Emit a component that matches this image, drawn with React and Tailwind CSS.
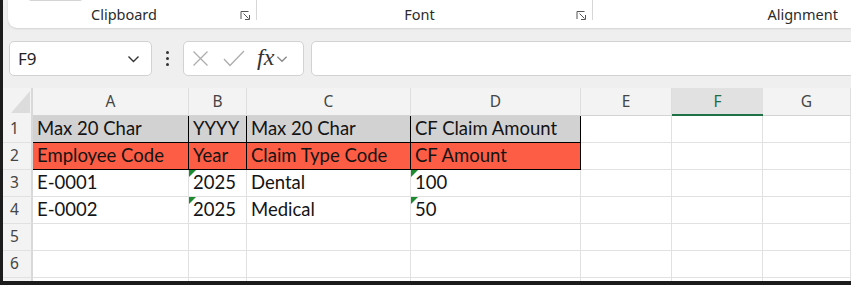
import React from 'react';

const cols = [
  { id: 'A', w: 'w-[156px]' },
  { id: 'B', w: 'w-[58px]' },
  { id: 'C', w: 'w-[164px]' },
  { id: 'D', w: 'w-[170px]' },
  { id: 'E', w: 'w-[91px]' },
  { id: 'F', w: 'w-[91px]' },
  { id: 'G', w: 'w-[88px]' },
];

const rows = [
  { n: 1, cells: ['Max 20 Char', 'YYYY', 'Max 20 Char', 'CF Claim Amount'], fill: 'bg-[#d2d2d2]', boxed: true },
  { n: 2, cells: ['Employee Code', 'Year', 'Claim Type Code', 'CF Amount'], fill: 'bg-[#fc5d44]', boxed: true },
  { n: 3, cells: ['E-0001', '2025', 'Dental', '100'], flag: [1, 3] },
  { n: 4, cells: ['E-0002', '2025', 'Medical', '50'], flag: [1, 3] },
  { n: 5, cells: [] },
  { n: 6, cells: [] },
  { n: '', cells: [] },
];

const Launcher = () => (
  <svg width="11" height="11" viewBox="0 0 11 11" fill="none" stroke="#555" strokeWidth="1">
    <path d="M1 9V1.5h7.5" />
    <path d="M3.5 3.5l5 5M9.5 5v4.5H5" />
  </svg>
);

const Chevron = ({ color = '#333', w = 13 }) => (
  <svg width={w} height="8" viewBox="0 0 13 8" fill="none" stroke={color} strokeWidth="1.4">
    <path d="M1.5 1.5l5 5 5-5" />
  </svg>
);

export default function App() {
  return (
    <div className="w-[851px] h-[285px] overflow-hidden bg-[#1c1c1c] pl-[3px] pb-[4px]">
      <div className="h-full bg-[#efefef] flex flex-col overflow-hidden">
        {/* Ribbon group labels */}
        <div className="h-[28px] shrink-0 ml-[5px] bg-white rounded-bl-[9px] shadow-[0_1px_2px_rgba(0,0,0,0.12)] flex text-[14.5px] text-[#2b2b2b] font-['Noto_Sans',sans-serif]">
          <div className="w-[249px] flex relative">
            <div className="absolute left-[20px] top-[-8px] w-[55px] h-[9px] border border-[#d4d4d4] rounded-[3px]"></div>
            <div className="flex-1 text-center pt-[3px] leading-[22px]">Clipboard</div>
            <div className="pt-[10px] mr-[5px]"><Launcher /></div>
            <div className="w-px h-[20px] bg-[#d6d6d6]"></div>
          </div>
          <div className="w-[336px] flex">
            <div className="flex-1 text-center pt-[3px] leading-[22px] pl-[6px]">Font</div>
            <div className="pt-[10px] mr-[5px]"><Launcher /></div>
            <div className="w-px h-[20px] bg-[#d6d6d6]"></div>
          </div>
          <div className="flex-1 text-right pt-[3px] leading-[22px] pr-[13px]">Alignment</div>
        </div>

        {/* Formula bar */}
        <div className="mt-[13px] h-[35px] shrink-0 flex font-['Noto_Sans',sans-serif]">
          <div className="ml-[6px] w-[143px] bg-white border border-[#d2d2d2] rounded-[5px] flex items-center justify-between pl-[8px] pr-[11px] text-[17px] text-[#222]">
            <span>F9</span>
            <Chevron />
          </div>
          <div className="w-[31px] flex flex-col items-center justify-center gap-[3px]">
            <span className="w-[3px] h-[3px] rounded-full bg-[#333]"></span>
            <span className="w-[3px] h-[3px] rounded-full bg-[#333]"></span>
            <span className="w-[3px] h-[3px] rounded-full bg-[#333]"></span>
          </div>
          <div className="w-[121px] bg-white border border-[#d2d2d2] rounded-[5px] flex items-center pl-[8px]">
            <svg width="17" height="17" viewBox="0 0 17 17" fill="none" stroke="#adadad" strokeWidth="1.3">
              <path d="M1.5 1.5l14 14M15.5 1.5l-14 14" />
            </svg>
            <svg className="ml-[14px]" width="22" height="17" viewBox="0 0 22 17" fill="none" stroke="#adadad" strokeWidth="1.3">
              <path d="M1 9l6 6.5L21 1" />
            </svg>
            <span className="ml-[12px] font-['Liberation_Serif',serif] italic text-[24px] leading-none text-[#333] -mt-[3px]">fx</span>
            <span className="ml-[2px]"><Chevron color="#888" w={12} /></span>
          </div>
          <div className="ml-[7px] flex-1 -mr-[10px] bg-white border border-[#d2d2d2] rounded-[5px]"></div>
        </div>

        {/* Sheet grid */}
        <div className="mt-[12px] flex-1 flex flex-col overflow-hidden bg-white font-['Lato',sans-serif]">
          <div className="h-[28px] shrink-0 flex bg-[#f3f3f3] font-['Noto_Sans',sans-serif] text-[15.5px] text-[#454545]">
            <div className="w-[30px] shrink-0 relative border-r-2 border-[#d9d9d9]">
              <svg className="absolute left-[8px] top-[3px]" width="19" height="22" viewBox="0 0 19 22">
                <path d="M19 0V22H0Z" fill="#dcdcdc" />
              </svg>
            </div>
            {cols.map((c) =>
              c.id === 'F' ? (
                <div key={c.id} className={`${c.w} shrink-0 flex items-center justify-center bg-[#e1e1e1] border-b-2 border-[#1e7145] text-[#1e6b44] pt-[2px]`}>
                  {c.id}
                </div>
              ) : (
                <div key={c.id} className={`${c.w} shrink-0 flex items-center justify-center border-r border-[#dedede] border-b border-b-[#d4d4d4]`}>
                  {c.id}
                </div>
              )
            )}
          </div>
          {rows.map((r, ri) => (
            <div key={ri} className="h-[27px] shrink-0 flex">
              <div className="w-[30px] shrink-0 bg-[#f3f3f3] border-r-2 border-[#d9d9d9] border-b border-b-[#e1e1e1] pl-[7px] flex items-center font-['Noto_Sans',sans-serif] text-[15.5px] text-[#454545]">
                {r.n}
              </div>
              {cols.map((c, i) => {
                const text = r.cells[i];
                const inBox = r.boxed && i < 4;
                const flagged = r.flag && r.flag.includes(i);
                return (
                  <div
                    key={c.id}
                    className={`${c.w} shrink-0 relative flex items-end pb-[2px] pl-[4px] text-[18.5px] leading-[24px] text-[#141414] whitespace-nowrap ${
                      inBox ? `${r.fill} border-r border-b border-black` : 'border-r border-b border-[#e1e1e1]'
                    }`}
                  >
                    {flagged && (
                      <svg className="absolute left-0 top-0" width="7" height="7" viewBox="0 0 7 7">
                        <path d="M0 0H7L0 7Z" fill="#1c8a2e" />
                      </svg>
                    )}
                    {text}
                  </div>
                );
              })}
            </div>
          ))}
        </div>
      </div>
    </div>
  );
}
